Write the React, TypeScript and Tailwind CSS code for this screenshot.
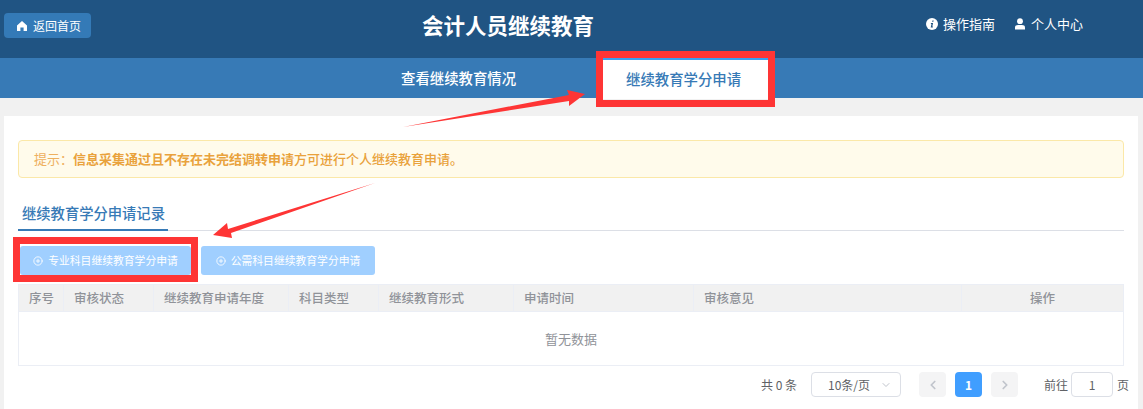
import { ChevronDown, ChevronLeft, ChevronRight, CirclePlus } from "lucide-react";

const font = "font-['Noto_Sans_CJK_SC','Liberation_Sans',sans-serif]";

const columns = [
  { label: "序号", className: "w-[45px] pl-[10px]" },
  { label: "审核状态", className: "w-[90px] pl-[10px]" },
  { label: "继续教育申请年度", className: "w-[135px] pl-[10px]" },
  { label: "科目类型", className: "w-[90px] pl-[10px]" },
  { label: "继续教育形式", className: "w-[135px] pl-[10px]" },
  { label: "申请时间", className: "w-[180px] pl-[10px]" },
  { label: "审核意见", className: "w-[268px] pl-[10px]" },
  { label: "操作", className: "flex-1 justify-center" },
];

function HomeIcon() {
  return (
    <svg width="12" height="12" viewBox="0 0 12 12" fill="#fff">
      <path d="M6 1 11 5.6V11H7.6V7.6H4.4V11H1V5.6Z" />
    </svg>
  );
}

function InfoIcon() {
  return (
    <svg width="12" height="12" viewBox="0 0 12 12">
      <circle cx="6" cy="6" r="6" fill="#fff" />
      <path d="M6.4 2.4h1.3l-.3 1.3H6.1ZM5 5h2.1L6.3 8.6h.7l-.2.9H4.7l.8-3.6h-.7Z" fill="#205483" />
    </svg>
  );
}

function UserIcon() {
  return (
    <svg width="12" height="12" viewBox="0 0 12 12" fill="#fff">
      <circle cx="6" cy="3.2" r="2.9" />
      <path d="M1 11.6V9.4C1 7.8 2.4 7 4 7h4c1.6 0 3 .8 3 2.4v2.2Z" />
    </svg>
  );
}

export default function App() {
  return (
    <div className={`${font} relative h-[409px] w-[1143px] overflow-hidden bg-[#f1f1f1]`}>
      <header className="flex h-[58px] items-start bg-[#205483] text-white">
        <div className="w-[422px] pl-1 pt-[13px]">
          <button className="flex h-[25px] w-[87px] items-center gap-[5px] rounded bg-[#347ab7] pl-3 text-xs">
            <HomeIcon />
            返回首页
          </button>
        </div>
        <h1 className="w-[172px] pt-[7px] text-[21.5px] leading-[36px] font-bold whitespace-nowrap">会计人员继续教育</h1>
        <div className="ml-[332px] flex items-center pt-[14px] text-[13px] leading-[19px]">
          <InfoIcon />
          <span className="ml-[5px]">操作指南</span>
          <span className="ml-[19px]">
            <UserIcon />
          </span>
          <span className="ml-[5px]">个人中心</span>
        </div>
      </header>

      <nav className="flex h-10 bg-[#377ab6] pl-[378px] text-[14.4px] font-medium">
        <div className="w-[225px] pl-[23px] leading-[40px] text-white">查看继续教育情况</div>
        <div className="h-[41px] w-[165px] border-t-2 border-[#39a0f0] bg-white pl-[23px] leading-[38px] text-[#377ab6]">
          继续教育学分申请
        </div>
      </nav>

      <main className="mx-1 mt-[18px] h-[293px] w-[1134px] bg-white px-[14px] pt-6">
        <div className="flex h-[38px] w-[1106px] items-center rounded border border-[#fbe8a8] bg-[#fffbeb] pl-[15px] text-[13px] text-[#e9a23c]">
          <span className="text-[#eeb05e]">提示：</span>
          <span className="font-bold">信息采集通过且不存在未完结调转申请</span>
          <span className="font-medium">方可进行个人继续教育申请。</span>
        </div>

        <div className="mt-[22px] h-[31px] w-[1106px] border-b border-[#dcdfe6]">
          <div className="h-[31px] w-[150px] border-b-2 border-[#377ab6] pl-1 text-[14.3px] leading-[26px] font-medium text-[#377ab6]">
            继续教育学分申请记录
          </div>
        </div>

        <div className="mt-[15px] flex gap-[10px] pl-[2px]">
          <button className="flex h-[29px] w-[171px] items-center justify-center gap-[5px] rounded-[3px] bg-[#a0cfff] text-[10.8px] text-white">
            <CirclePlus size={10} />
            专业科目继续教育学分申请
          </button>
          <button className="flex h-[29px] w-[174px] items-center justify-center gap-[5px] rounded-[3px] bg-[#a0cfff] text-[10.8px] text-white">
            <CirclePlus size={10} />
            公需科目继续教育学分申请
          </button>
        </div>

        <div className="mt-[9px] w-[1106px] border border-[#ebeef5]">
          <div className="flex h-[26px] bg-[#f1f1f1] text-[12.5px] font-medium text-[#909399]">
            {columns.map((col) => (
              <div key={col.label} className={`flex items-center border-r border-[#ebeef5] last:border-r-0 ${col.className}`}>
                {col.label}
              </div>
            ))}
          </div>
          <div className="flex h-[54px] items-center justify-center border-t border-[#ebeef5] text-[13px] text-[#909399]">
            暂无数据
          </div>
        </div>

        <div className="mt-[6px] flex h-[25px] w-[1120px] items-center text-xs whitespace-nowrap text-[#606266]">
          <span className="ml-[743px] w-[37px] shrink-0">共 0 条</span>
          <div className="ml-[13px] flex h-[25px] w-[90px] shrink-0 items-center justify-between rounded border border-[#dcdfe6] pr-2 pl-[16px]">
            10条/页
            <ChevronDown size={12} className="text-[#c0c4cc]" />
          </div>
          <div className="ml-[18px] flex h-[25px] w-[27px] shrink-0 items-center justify-center rounded-sm bg-[#f4f4f5] text-[#c0c4cc]">
            <ChevronLeft size={14} strokeWidth={3} />
          </div>
          <div className="ml-[9px] flex h-[25px] w-[27px] shrink-0 items-center justify-center rounded-sm bg-[#409eff] font-bold text-white">
            1
          </div>
          <div className="ml-[9px] flex h-[25px] w-[27px] shrink-0 items-center justify-center rounded-sm bg-[#f4f4f5] text-[#c0c4cc]">
            <ChevronRight size={14} strokeWidth={3} />
          </div>
          <span className="ml-[26px] shrink-0">前往</span>
          <div className="ml-[3px] flex h-[25px] w-[42px] shrink-0 items-center justify-center rounded border border-[#dcdfe6]">1</div>
          <span className="ml-1 shrink-0">页</span>
        </div>
      </main>

      {/* red annotations drawn over the screenshot */}
      <div className="absolute top-[51px] left-[596px] h-[56px] w-[179px] border-[7px] border-[#fe3535]" />
      <div className="absolute top-[237px] left-[13px] h-[45px] w-[185px] border-[7px] border-[#fe3535]" />
      <svg className="absolute top-0 left-0" width="1143" height="409" viewBox="0 0 1143 409" fill="#fe3535">
        <path d="M403 127 569 95 567 90 585 94 569 106 569 101Z" />
        <path d="M375 183 228 229 227 223 213 235 232 238 231 233Z" />
      </svg>
    </div>
  );
}
